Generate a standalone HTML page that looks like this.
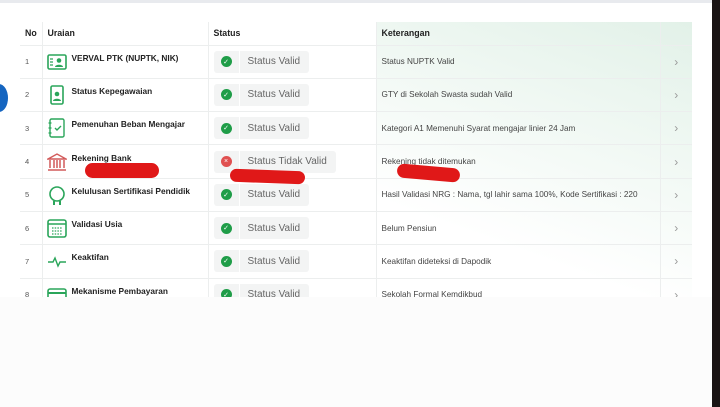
<!DOCTYPE html>
<html><head><style>
*{margin:0;padding:0;box-sizing:border-box}
body{width:720px;height:407px;overflow:hidden;background:#fff;font-family:"Liberation Sans",sans-serif;position:relative}
.top{position:absolute;left:0;top:0;width:712px;height:3px;background:#e8eaee}
.panel{position:absolute;left:8px;top:3px;width:704px;height:300px;background:#fff}
.grad{position:absolute;left:376px;top:22px;width:316px;height:275px;background:linear-gradient(200deg,#e2f1e8 0%,#f0f8f3 35%,#fff 75%)}
table{position:absolute;left:20px;top:22px;border-collapse:collapse;font-size:8.3px;color:#333}
td,th{border-bottom:1px solid #eceeee;border-right:1px solid #eceeee;height:33.3px;vertical-align:middle;text-align:left}
th{height:23px;font-weight:bold;color:#222;font-size:8.8px;padding-left:5px}
td.no{padding-left:5px;color:#555;font-size:7.5px}
td.ur{padding-left:4px}
.ur div{display:flex;align-items:center}
.ic{width:20px;height:20px;margin-right:5px;flex:none}
.ur b{font-size:8.3px;color:#222;margin-top:-8px}
.st{padding-left:5px}
.pill{display:inline-flex;align-items:center;height:22px;background:#f3f4f4;border-radius:3px;color:#666;font-size:10px}
.pill i{display:flex;width:26px;height:22px;align-items:center;justify-content:center;border-right:1px solid #fff}
.pill span{padding:0 9px 0 8px}
.dot{width:11px;height:11px;border-radius:50%;background:#1f9d48;color:#fff;font-size:7px;display:flex;align-items:center;justify-content:center;font-style:normal}
.ket{padding-left:5px;font-size:8.2px;color:#444}
.ch{text-align:center;color:#999;font-size:12px;border-right:none}
.red{position:absolute;background:#e01818;border-radius:8px}
.cover{position:absolute;left:0;top:297px;width:712px;height:110px;background:#fcfcfc}
.dark{position:absolute;left:712px;top:0;width:8px;height:407px;background:#1a1414}
</style></head><body>
<div class="top"></div>
<div class="panel"></div>
<div style="position:absolute;left:-10px;top:84px;width:18px;height:28px;border-radius:50%;background:#1565c0"></div>
<div class="grad"></div>
<table>
<tr><th style="width:22px">No</th><th style="width:166px">Uraian</th><th style="width:168px">Status</th><th style="width:284px">Keterangan</th><th style="width:32px;border-right:none"></th></tr>
<tr><td class="no">1</td><td class="ur"><div><svg class="ic" viewBox="0 0 20 20"><rect x="1" y="3" width="18" height="14" rx="1.5" fill="none" stroke="#2aa55a" stroke-width="1.6"/><circle cx="12" cy="8.5" r="2.3" fill="#2aa55a"/><path d="M8 15c0-3 8-3 8 0z" fill="#2aa55a"/><path d="M3 7h3M3 10h3M3 13h3" stroke="#2aa55a" stroke-width="1.3"/></svg><b>VERVAL PTK (NUPTK, NIK)</b></div></td><td class="st"><span class="pill"><i><em class="dot">✓</em></i><span>Status Valid</span></span></td><td class="ket">Status NUPTK Valid</td><td class="ch">›</td></tr>
<tr><td class="no">2</td><td class="ur"><div><svg class="ic" viewBox="0 0 20 20"><rect x="4" y="1" width="12" height="18" rx="1.5" fill="none" stroke="#2aa55a" stroke-width="1.6"/><circle cx="10" cy="9" r="2.3" fill="#2aa55a"/><path d="M6 16c0-3 8-3 8 0z" fill="#2aa55a"/></svg><b>Status Kepegawaian</b></div></td><td class="st"><span class="pill"><i><em class="dot">✓</em></i><span>Status Valid</span></span></td><td class="ket">GTY di Sekolah Swasta sudah Valid</td><td class="ch">›</td></tr>
<tr><td class="no">3</td><td class="ur"><div><svg class="ic" viewBox="0 0 20 20"><rect x="3" y="1" width="14" height="18" rx="1.5" fill="none" stroke="#2aa55a" stroke-width="1.4"/><path d="M8 10l2 2 4-4" fill="none" stroke="#2aa55a" stroke-width="1.4"/><path d="M1.5 5h3M1.5 10h3M1.5 15h3" stroke="#2aa55a" stroke-width="1.2"/></svg><b>Pemenuhan Beban Mengajar</b></div></td><td class="st"><span class="pill"><i><em class="dot">✓</em></i><span>Status Valid</span></span></td><td class="ket">Kategori A1 Memenuhi Syarat mengajar linier 24 Jam</td><td class="ch">›</td></tr>
<tr><td class="no">4</td><td class="ur"><div><svg class="ic" viewBox="0 0 20 20"><path d="M1 7L10 2l9 5z" fill="none" stroke="#d25a5a" stroke-width="1.4"/><path d="M3 8v8M7 8v8M10 8v8M13 8v8M17 8v8M1 18h18" stroke="#d25a5a" stroke-width="1.5"/></svg><b>Rekening Bank</b></div></td><td class="st"><span class="pill"><i><em class="dot" style="background:#e05050">×</em></i><span>Status Tidak Valid</span></span></td><td class="ket">Rekening tidak ditemukan</td><td class="ch">›</td></tr>
<tr><td class="no">5</td><td class="ur"><div><svg class="ic" viewBox="0 0 20 20"><circle cx="10" cy="9" r="7" fill="none" stroke="#2aa55a" stroke-width="1.6"/><path d="M7 16v4M13 16v4" stroke="#2aa55a" stroke-width="2"/></svg><b>Kelulusan Sertifikasi Pendidik</b></div></td><td class="st"><span class="pill"><i><em class="dot">✓</em></i><span>Status Valid</span></span></td><td class="ket">Hasil Validasi NRG : Nama, tgl lahir sama 100%, Kode Sertifikasi : 220</td><td class="ch">›</td></tr>
<tr><td class="no">6</td><td class="ur"><div><svg class="ic" viewBox="0 0 20 20"><rect x="1" y="2" width="18" height="17" rx="2" fill="none" stroke="#2aa55a" stroke-width="1.6"/><path d="M1 6h18" stroke="#2aa55a" stroke-width="1.6"/><path d="M5 10h10M5 13h10M5 16h10" stroke="#2aa55a" stroke-width="1.3" stroke-dasharray="1.5 1.2"/></svg><b>Validasi Usia</b></div></td><td class="st"><span class="pill"><i><em class="dot">✓</em></i><span>Status Valid</span></span></td><td class="ket">Belum Pensiun</td><td class="ch">›</td></tr>
<tr><td class="no">7</td><td class="ur"><div><svg class="ic" viewBox="0 0 20 20"><path d="M1 11h5l2-4 3 8 2-4h6" fill="none" stroke="#2aa55a" stroke-width="1.4"/></svg><b>Keaktifan</b></div></td><td class="st"><span class="pill"><i><em class="dot">✓</em></i><span>Status Valid</span></span></td><td class="ket">Keaktifan dideteksi di Dapodik</td><td class="ch">›</td></tr>
<tr><td class="no">8</td><td class="ur"><div><svg class="ic" viewBox="0 0 20 20"><rect x="1" y="4" width="18" height="13" rx="2" fill="none" stroke="#2aa55a" stroke-width="1.6"/><path d="M1 8h18" stroke="#2aa55a" stroke-width="2"/></svg><b>Mekanisme Pembayaran</b></div></td><td class="st"><span class="pill"><i><em class="dot">✓</em></i><span>Status Valid</span></span></td><td class="ket">Sekolah Formal Kemdikbud</td><td class="ch">›</td></tr>
</table>
<div class="red" style="left:85px;top:163px;width:74px;height:15px"></div>
<div class="red" style="left:230px;top:170px;width:75px;height:13px;transform:rotate(2deg)"></div>
<div class="red" style="left:397px;top:166px;width:63px;height:14px;transform:rotate(5deg)"></div>
<div class="cover"></div>
<div class="dark"></div>
</body></html>
